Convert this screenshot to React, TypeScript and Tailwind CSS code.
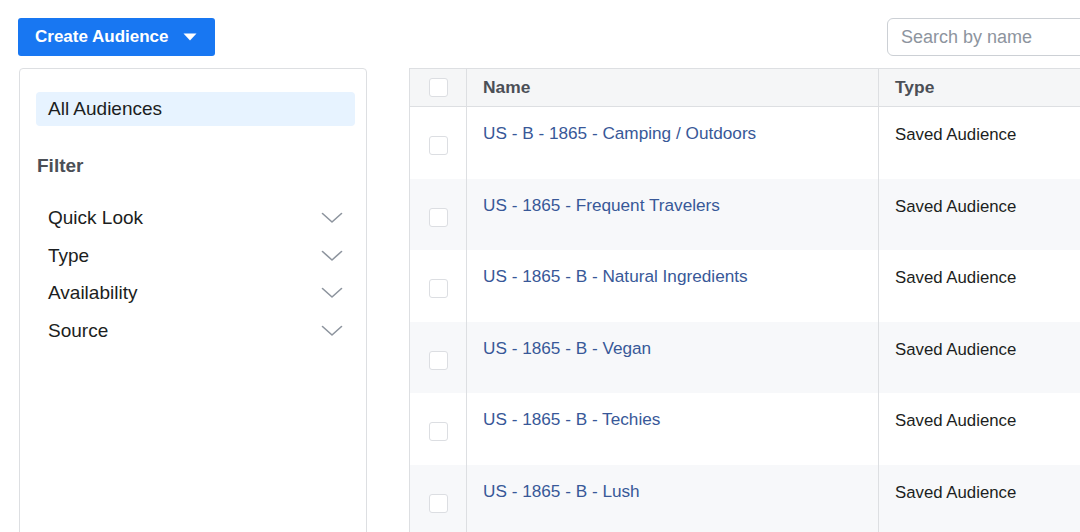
import React from "react";

const rows = [
  "US - B - 1865 - Camping / Outdoors",
  "US - 1865 - Frequent Travelers",
  "US - 1865 - B - Natural Ingredients",
  "US - 1865 - B - Vegan",
  "US - 1865 - B - Techies",
  "US - 1865 - B - Lush",
];

const filters = ["Quick Look", "Type", "Availability", "Source"];

function Chevron() {
  return (
    <svg width="22" height="12" viewBox="0 0 22 12" fill="none" aria-hidden>
      <path d="M1.5 1.5 L11 10 L20.5 1.5" stroke="#8d949e" strokeWidth="1.6" strokeLinecap="round" strokeLinejoin="round" />
    </svg>
  );
}

function Box() {
  return <div className="h-[19px] w-[19px] rounded-[3px] border border-[#dcdee2] bg-white" />;
}

export default function App() {
  return (
    <div
      className="h-[532px] w-[1080px] overflow-hidden bg-white text-[#1c1e21]"
      style={{ fontFamily: '"Liberation Sans", Arial, sans-serif' }}
    >
      <div className="flex items-center justify-between pl-[18px] pt-[18px]">
        <button
          type="button"
          className="flex h-[38px] w-[197px] items-center gap-[14px] rounded-[3px] bg-[#1877f2] pl-[17px] text-[17px] font-bold text-white"
        >
          Create Audience
          <svg width="14" height="8" viewBox="0 0 14 8" aria-hidden>
            <path d="M0.5 0.5 H13.5 L7 7.5 Z" fill="white" />
          </svg>
        </button>
        <div className="-mr-[40px] flex h-[38px] w-[233px] items-center rounded-[6px] border border-[#ccd0d5] bg-white pl-[13px] text-[18px] text-[#8d949e]">
          Search by name
        </div>
      </div>

      <div className="mt-[12px] flex">
        <aside className="ml-[19px] h-[480px] w-[348px] shrink-0 rounded-[4px] border border-[#dddfe2] pl-[16px] pr-[11px] pt-[23px]">
          <div className="flex h-[34px] items-center rounded-[4px] bg-[#e7f3ff] pl-[12px] text-[19px]">
            All Audiences
          </div>
          <div className="mt-[26px] pl-[1px] text-[19px] font-bold text-[#4b4f56]">Filter</div>
          <div className="mt-[19px] flex flex-col">
            {filters.map((f) => (
              <div key={f} className="flex h-[37.6px] items-center justify-between pl-[12px] pr-[12px] text-[19px]">
                <span>{f}</span>
                <Chevron />
              </div>
            ))}
          </div>
        </aside>

        <div className="ml-[42px] w-[720px] shrink-0 border-l border-t border-[#dddfe2]">
          <div className="flex h-[38px] border-b border-[#dddfe2] bg-[#f5f6f7] text-[17.4px] font-bold text-[#4b4f56]">
            <div className="flex w-[57px] items-center justify-center border-r border-[#dddfe2]">
              <Box />
            </div>
            <div className="flex w-[412px] items-center border-r border-[#dddfe2] pl-[16px]">Name</div>
            <div className="flex flex-1 items-center pl-[16px]">Type</div>
          </div>
          {rows.map((name, i) => (
            <div key={name} className={`flex h-[71.5px] ${i % 2 === 1 ? "bg-[#f7f8fa]" : "bg-white"}`}>
              <div className="flex w-[57px] items-center justify-center border-r border-[#dddfe2] pt-[6px]">
                <Box />
              </div>
              <div className="w-[412px] border-r border-[#dddfe2] pl-[16px] pt-[14px] text-[17.2px] text-[#385898]">{name}</div>
              <div className="flex-1 pl-[16px] pt-[15px] text-[16.8px]">Saved Audience</div>
            </div>
          ))}
        </div>
      </div>
    </div>
  );
}
